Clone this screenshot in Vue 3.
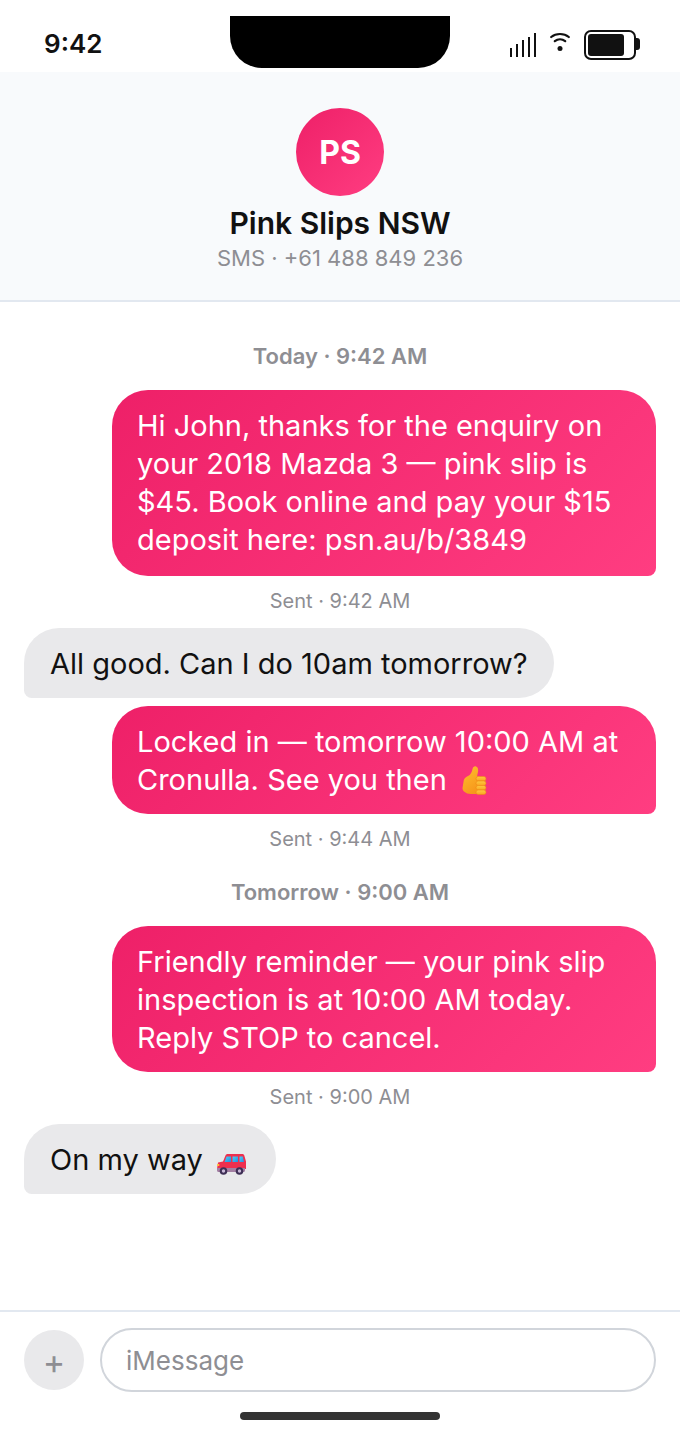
<script setup>
const messages = [
  { type: "time", text: "Today · 9:42 AM" },
  { type: "out", long: true, text: "Hi John, thanks for the enquiry on your 2018 Mazda 3 — pink slip is $45. Book online and pay your $15 deposit here: psn.au/b/3849", sent: "Sent · 9:42 AM" },
  { type: "in", text: "All good. Can I do 10am tomorrow?" },
  { type: "out", text: "Locked in — tomorrow 10:00 AM at Cronulla. See you then ", emoji: "thumb", sent: "Sent · 9:44 AM" },
  { type: "time", text: "Tomorrow · 9:00 AM" },
  { type: "out", text: "Friendly reminder — your pink slip inspection is at 10:00 AM today. Reply STOP to cancel.", sent: "Sent · 9:00 AM" },
  { type: "in", text: "On my way ", emoji: "car" },
];
const fingers = [10.5, 15, 19.5, 24];
</script>

<template>
  <div class="phone">
    <svg width="0" height="0" class="defs">
      <defs>
        <linearGradient id="thumbFill" x1="0" y1="0" x2="0.5" y2="1">
          <stop offset="0" stop-color="#ffc02e" />
          <stop offset="1" stop-color="#f7981c" />
        </linearGradient>
        <linearGradient id="fingerFill" x1="0" y1="0" x2="0" y2="1">
          <stop offset="0" stop-color="#ffc93f" />
          <stop offset="1" stop-color="#f9a522" />
        </linearGradient>
        <linearGradient id="glass" x1="0" y1="0" x2="1" y2="1">
          <stop offset="0" stop-color="#4fd0f7" />
          <stop offset="1" stop-color="#1f8fe0" />
        </linearGradient>
      </defs>
    </svg>

    <div class="status">
      <span class="clock">9:42</span>
      <div class="notch"></div>
      <div class="status-icons">
        <svg width="26" height="24" viewBox="0 0 26 24" fill="#111">
          <rect x="0" y="15" width="2" height="9" />
          <rect x="6" y="11" width="2" height="13" />
          <rect x="12" y="7" width="2" height="17" />
          <rect x="18" y="4" width="2" height="20" />
          <rect x="24" y="0" width="2" height="24" />
        </svg>
        <svg class="wifi" width="20" height="20" viewBox="0 0 20 20" fill="none" stroke="#111" stroke-width="2.2" stroke-linecap="round">
          <path d="M1.2 5C6 1 14 1 18.8 5" />
          <path d="M4.8 9.2C7.8 6.8 12.2 6.8 15.2 9.2" />
          <circle cx="10" cy="16.4" r="2.5" fill="#111" stroke="none" />
        </svg>
        <div class="battery"><div class="battery-fill"></div></div>
      </div>
    </div>

    <header class="contact">
      <div class="avatar">PS</div>
      <div class="name">Pink Slips NSW</div>
      <div class="sub">SMS · +61 488 849 236</div>
    </header>

    <main class="thread">
      <template v-for="(m, index) in messages" :key="index">
        <div v-if="m.type === 'time'" class="time">{{ m.text }}</div>
        <template v-else>
          <div class="bubble" :class="[m.type, { long: m.long }]">
            {{ m.text }}
            <svg v-if="m.emoji === 'thumb'" class="emoji" width="40" height="32" viewBox="0 0 40 32" role="img" aria-label="👍">
              <path d="M8.500 16c0-3 2-5 4.500-6 2.500-1 4-4 4.500-7C18 1 19.500 0 21 .5c2 .7 2.500 3 2 5.500-.3 1.500-.8 3-1 4.500h3v17.500h-9c-3 0-5-.8-7-2.500-1-1-1.500-2-1.500-3.500z" fill="url(#thumbFill)" />
              <rect v-for="y in fingers" :key="y" x="21" :y="y" width="10" height="4.500" rx="2.200" fill="url(#fingerFill)" stroke="#ee8a14" stroke-width=".6" />
            </svg>
            <svg v-else-if="m.emoji === 'car'" class="emoji" width="40" height="32" viewBox="0 0 40 32" role="img" aria-label="🚗">
              <path d="M7 16.500l5-1 2.500-6c.4-1 1.200-1.500 2.200-1.500h14.600c1 0 1.700.5 2 1.500l1.700 6v7.500H6z" fill="#ee2f4e" />
              <path d="M6 22h28v2.500c0 .8-.6 1.500-1.500 1.500h-25c-.8 0-1.500-.7-1.500-1.500z" fill="#a37fa3" />
              <path d="M15.500 10.500h4.500v5.500h-6.500z" fill="url(#glass)" />
              <path d="M21.500 10.500h5.500v5.500h-5.500z" fill="url(#glass)" />
              <path d="M28.500 10.500h3.300l1.200 5.500h-4.500z" fill="url(#glass)" />
              <circle cx="12.500" cy="25" r="3.800" fill="#3e2f55" />
              <circle cx="12.500" cy="25" r="1.700" fill="#c9b8d8" />
              <circle cx="28.500" cy="25" r="3.800" fill="#3e2f55" />
              <circle cx="28.500" cy="25" r="1.700" fill="#c9b8d8" />
              <rect x="6" y="18" width="2.500" height="2" rx="1" fill="#ffc533" />
            </svg>
          </div>
          <div v-if="m.sent" class="sent">{{ m.sent }}</div>
        </template>
      </template>
    </main>

    <footer class="composer">
      <div class="input-row">
        <div class="plus">+</div>
        <div class="input">iMessage</div>
      </div>
      <div class="home"></div>
    </footer>
  </div>
</template>

<style scoped>
.phone {
  position: relative;
  width: 680px;
  height: 1436px;
  display: flex;
  flex-direction: column;
  background: #fff;
  color: #111;
  font-family: Inter, "Noto Sans", sans-serif;
  overflow: hidden;
}

.defs {
  position: absolute;
}

.status {
  height: 72px;
  flex: none;
  display: flex;
  align-items: center;
  justify-content: space-between;
  padding: 16px 44px 0;
  box-sizing: border-box;
}

.clock {
  font-size: 26px;
  font-weight: 600;
  line-height: 1;
  margin-top: -1px;
}

.notch {
  position: absolute;
  left: 230px;
  top: 16px;
  width: 220px;
  height: 52px;
  background: #000;
  border-radius: 0 0 32px 32px;
}

.status-icons {
  display: flex;
  align-items: center;
  gap: 14px;
  margin-top: 2px;
}

.wifi {
  margin-top: -7px;
}

.battery {
  position: relative;
  width: 52px;
  height: 30px;
  border: 2px solid #111;
  border-radius: 7px;
  box-sizing: border-box;
  padding: 2px;
}

.battery::after {
  content: "";
  position: absolute;
  right: -6px;
  top: 6px;
  width: 4px;
  height: 12px;
  background: #111;
  border-radius: 0 3px 3px 0;
}

.battery-fill {
  width: 36px;
  height: 100%;
  background: #111;
  border-radius: 3px;
}

.contact {
  height: 230px;
  flex: none;
  box-sizing: border-box;
  background: #f8fafc;
  border-bottom: 2px solid #e2e8f0;
  padding-top: 36px;
  display: flex;
  flex-direction: column;
  align-items: center;
}

.avatar {
  width: 88px;
  height: 88px;
  border-radius: 50%;
  background: linear-gradient(135deg, #ee2068, #ff3d81);
  color: #fff;
  font-size: 32px;
  font-weight: 700;
  display: flex;
  align-items: center;
  justify-content: center;
}

.name {
  margin-top: 9px;
  font-size: 30px;
  font-weight: 600;
  line-height: 36px;
}

.sub {
  margin-top: 1px;
  font-size: 22px;
  line-height: 32px;
  color: #8e8e93;
}

.thread {
  flex: 1;
  padding: 28px 24px 0;
  display: flex;
  flex-direction: column;
}

.time {
  align-self: center;
  font-size: 22px;
  font-weight: 600;
  line-height: 28px;
  color: #8e8e93;
  margin: 12px 0 20px;
}

.bubble {
  font-size: 29px;
  line-height: 38px;
  padding: 17px 26px 15px;
  box-sizing: border-box;
  max-width: 544px;
}

.emoji {
  vertical-align: -6px;
  margin: -6px -1px -2px 0;
}

.out {
  align-self: flex-end;
  width: 544px;
  padding-left: 25px;
  background: linear-gradient(135deg, #ee2068, #ff3d81);
  color: #fff;
  border-radius: 36px 36px 8px 36px;
}

.long {
  padding-bottom: 17px;
}

.in {
  align-self: flex-start;
  background: #e9e9eb;
  border-radius: 36px 36px 36px 8px;
  margin-bottom: 8px;
}

.sent {
  align-self: center;
  font-size: 20px;
  line-height: 26px;
  color: #8e8e93;
  margin: 12px 0 14px;
}

.composer {
  height: 126px;
  flex: none;
  box-sizing: border-box;
  border-top: 2px solid #e2e8f0;
  padding: 16px 24px 0;
}

.input-row {
  display: flex;
  align-items: center;
  gap: 16px;
}

.plus {
  width: 60px;
  height: 60px;
  border-radius: 50%;
  background: #e9e9eb;
  color: #8e8e93;
  font-size: 34px;
  padding-top: 3px;
  box-sizing: border-box;
  display: flex;
  align-items: center;
  justify-content: center;
}

.input {
  flex: 1;
  height: 64px;
  box-sizing: border-box;
  border: 2px solid #d1d5db;
  border-radius: 32px;
  padding: 1px 24px 0;
  font-size: 26px;
  line-height: 60px;
  color: #8e8e93;
}

.home {
  width: 200px;
  height: 8px;
  margin: 20px auto 0;
  border-radius: 4px;
  background: #333;
}
</style>
